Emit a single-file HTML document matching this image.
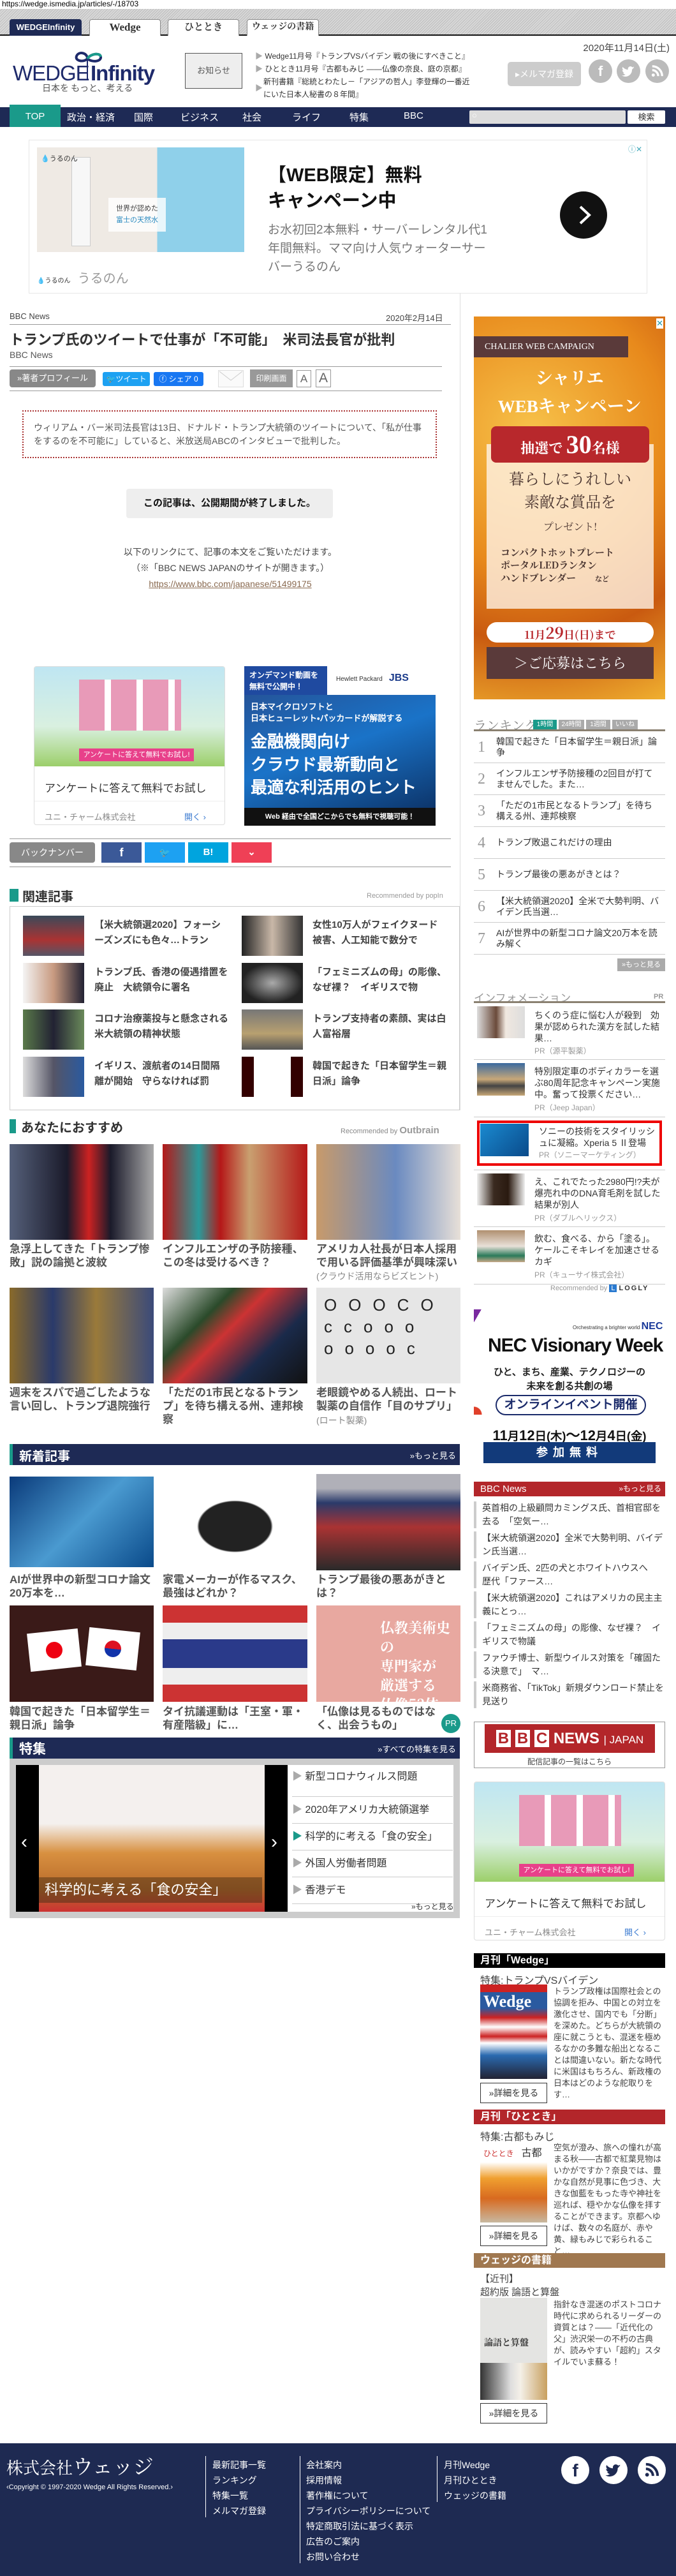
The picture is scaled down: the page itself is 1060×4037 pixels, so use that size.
<!DOCTYPE html>
<html lang="ja"><head><meta charset="utf-8">
<style>
*{margin:0;padding:0;box-sizing:border-box}
body{width:1060px;height:4037px;position:relative;background:#fff;font-family:"Liberation Sans","Noto Sans CJK JP",sans-serif;color:#333;overflow:hidden;font-size:13px}
.a{position:absolute}
.w{color:#fff}
.t{white-space:nowrap}
.hr{position:absolute;height:1px;background:#999}
.tab{position:absolute;top:30px;height:26px;background:#fff;border:1px solid #888;border-bottom:none;border-radius:4px 4px 0 0;text-align:center;font-weight:bold;font-size:15px;line-height:24px;font-family:"Liberation Serif","Noto Serif CJK SC",serif}
.nav{position:absolute;top:173px;color:#fff;font-size:15px}
.rel{position:absolute;width:210px;font-size:15px;font-weight:bold;line-height:24px;color:#444;height:48px;overflow:hidden}
.img{position:absolute}
.gt{position:absolute;width:226px;font-size:17px;font-weight:bold;line-height:21px;color:#555}
.src{position:absolute;font-size:14px;color:#888}
.rk{position:absolute;left:743px;width:300px;height:50px;border-bottom:1px solid #ccc}
.rk b{position:absolute;left:6px;top:12px;font:24px "Liberation Serif",serif;color:#999;font-weight:normal}
.rk span{position:absolute;left:35px;top:8px;width:258px;font-size:14px;line-height:17px;color:#333}
.inf{position:absolute;left:838px;width:200px;font-size:14px;line-height:18px;color:#333}
.pr{position:absolute;left:838px;font-size:12px;color:#999}
.sep{position:absolute;left:743px;width:300px;height:1px;background:#ccc}
.bl{position:absolute;left:743px;width:300px;border-left:4px solid #ccc;padding-left:9px;font-size:14px;line-height:21px;color:#333;height:42px;overflow:hidden}
.sb{position:absolute;left:743px;width:300px;height:23px;color:#fff;font-weight:bold;font-size:16px;line-height:23px;padding-left:10px}
.btn{position:absolute;left:753px;width:105px;height:32px;border:1px solid #333;font-size:14px;line-height:30px;text-align:center;background:#fff}
.desc{position:absolute;left:868px;width:172px;font-size:13px;line-height:18px;color:#444}
.fl{position:absolute;color:#fff;font-size:14px}
.bar{position:absolute;left:15px;width:706px;height:33px;background:#1e2a55;border-left:5px solid #1a9a8a}
</style></head><body>

<div class="a t" style="left:3px;top:0;font-size:12px;line-height:13px;color:#000">https://wedge.ismedia.jp/articles/-/18703</div>
<div class="a" style="left:0;top:14px;width:1060px;height:42px;background:repeating-linear-gradient(135deg,#d8d8d8 0 2px,#bdbdbd 2px 3px);border-bottom:2px solid #111"></div>
<div class="tab" style="left:15px;width:113px;background:#1e2a55;color:#fff;font-family:'Liberation Sans',sans-serif;font-size:13px;border-color:#1e2a55">WEDGE<span style="font-weight:bold">Infinity</span></div>
<div class="tab" style="left:140px;width:112px;font-size:17px">Wedge</div>
<div class="tab" style="left:263px;width:112px">ひととき</div>
<div class="tab" style="left:387px;width:113px;font-size:14px">ウェッジの書籍</div>

<svg class="a" style="left:20px;top:76px" width="230" height="70" viewBox="0 0 230 70">
<path d="M117 16 C117 6 103 4 100 12 C97 20 112 22 117 16 C122 8 137 6 138 13 C139 21 124 22 117 16" fill="none" stroke="#1e2a6b" stroke-width="4"/>
<path d="M117 16 C122 8 137 6 138 13" fill="none" stroke="#1a9a8a" stroke-width="4"/>
<line x1="117" y1="18" x2="117" y2="50" stroke="#1e2a6b" stroke-width="2"/>
<text x="0" y="50" font-family="Liberation Sans,sans-serif" font-size="33" fill="#1e2a6b" letter-spacing="-1">WEDGE</text>
<text x="122" y="50" font-family="Liberation Sans,sans-serif" font-size="33" font-weight="bold" fill="#1e2a6b" letter-spacing="-1">Infinity</text>
<text x="46" y="67" font-family="Noto Sans CJK JP,sans-serif" font-size="14" fill="#555">日本を もっと、考える</text>
</svg>
<div class="a" style="left:290px;top:83px;width:90px;height:56px;background:#eee;border:1px solid #555;font-size:13px;line-height:54px;text-align:center;color:#555">お知らせ</div>
<div class="a" style="left:400px;top:78px;font-size:12px;line-height:20px;color:#333">
<div><span style="color:#aaa">▶</span> Wedge11月号『トランプVSバイデン 戦の後にすべきこと』</div>
<div><span style="color:#aaa">▶</span> ひととき11月号『古都もみじ ――仏像の奈良、庭の京都』</div>
<div style="position:relative;padding-left:13px"><span style="color:#aaa;position:absolute;left:0;top:10px">▶</span>新刊書籍『総統とわたし－「アジアの哲人」李登輝の一番近<br>にいた日本人秘書の８年間』</div>
</div>
<div class="a t" style="right:10px;top:64px;font-size:15px;color:#444">2020年11月14日(土)</div>
<div class="a" style="left:796px;top:97px;width:115px;height:38px;background:#ccc;border-radius:5px;color:#fff;font-size:14px;line-height:38px;text-align:center">▸メルマガ登録</div>
<div class="a" style="left:923px;top:93px;width:37px;height:37px;border-radius:50%;background:#bbb;color:#fff;font:bold 22px/37px 'Liberation Sans';text-align:center">f</div>
<div class="a" style="left:967px;top:93px;width:37px;height:37px;border-radius:50%;background:#bbb"><svg width="37" height="37" viewBox="0 0 24 24"><path d="M18 8.5c-.5.2-1 .4-1.5.4.6-.3 1-.9 1.2-1.5-.5.3-1.1.5-1.7.7a2.6 2.6 0 0 0-4.5 2.4c-2.2-.1-4.1-1.2-5.4-2.8-.7 1.2-.3 2.7.8 3.5-.4 0-.8-.1-1.2-.3 0 1.3.9 2.4 2.1 2.6-.4.1-.8.1-1.2 0 .3 1.1 1.300 1.8 2.4 1.8-1.1.9-2.5 1.3-3.9 1.1 4.5 2.9 10.5-.2 10.5-5.8v-.3c.5-.3.9-.8 1.4-1.8z" fill="#fff"/></svg></div>
<div class="a" style="left:1012px;top:93px;width:37px;height:37px;border-radius:50%;background:#bbb"><svg width="37" height="37" viewBox="0 0 24 24"><circle cx="8" cy="16" r="1.6" fill="#fff"/><path d="M7 11a6 6 0 0 1 6 6M7 7a10 10 0 0 1 10 10" stroke="#fff" stroke-width="2.2" fill="none"/></svg></div>

<div class="a" style="left:0;top:168px;width:1060px;height:31px;background:#1e2a55"></div>
<div class="a" style="left:15px;top:164px;width:80px;height:35px;background:#1a9a8a;color:#fff;font-size:15px;line-height:38px;text-align:center">TOP</div>
<div class="nav" style="left:105px">政治・経済</div>
<div class="nav" style="left:210px">国際</div>
<div class="nav" style="left:283px">ビジネス</div>
<div class="nav" style="left:380px">社会</div>
<div class="nav" style="left:458px">ライフ</div>
<div class="nav" style="left:548px">特集</div>
<div class="nav" style="left:633px">BBC</div>
<div class="a" style="left:736px;top:173px;width:245px;height:21px;background:#ddd;border-radius:2px"><span style="color:#fff;font-size:13px;padding-left:4px">○</span></div>
<div class="a" style="left:984px;top:173px;width:59px;height:21px;background:#fff;border-radius:2px;font-size:13px;line-height:21px;text-align:center;color:#333">検索</div>

<div class="a" style="left:45px;top:219px;width:970px;height:241px;border:1px solid #e6e6e6"></div>
<div class="a" style="left:58px;top:231px;width:325px;height:164px;background:linear-gradient(90deg,#efeae4 0 58%,#8fd0ea 58% 100%)"></div>
<div class="a" style="left:112px;top:246px;width:30px;height:140px;background:#f7f7f7;border:1px solid #ccc"></div>
<div class="a" style="left:170px;top:310px;width:90px;height:53px;background:rgba(255,255,255,.8);font-size:11px;line-height:18px;text-align:center;padding-top:8px;color:#444">世界が認めた<br><span style="color:#2a8ac0">富士の天然水</span></div>
<div class="a" style="left:64px;top:240px;font-size:11px;color:#333">💧うるのん</div>
<div class="a t" style="left:420px;top:255px;font-size:29px;font-weight:bold;color:#111;line-height:40px">【WEB限定】無料<br>キャンペーン中</div>
<div class="a" style="left:420px;top:346px;width:360px;font-size:19px;line-height:29px;color:#777">お水初回2本無料・サーバーレンタル代1年間無料。ママ向け人気ウォーターサーバーうるのん</div>
<div class="a" style="left:878px;top:300px;width:74px;height:74px;border-radius:50%;background:#111"><svg width="74" height="74"><path d="M32 24 L46 37 L32 50" stroke="#fff" stroke-width="4" fill="none"/></svg></div>
<div class="a t" style="left:58px;top:420px;font-size:20px;color:#999"><span style="font-size:10px;color:#333">💧うるのん</span>&nbsp; うるのん</div>
<div class="a" style="left:985px;top:225px;font-size:12px;color:#4ab">ⓘ✕</div>

<div class="a" style="left:721px;top:460px;width:1px;height:1280px;background:#ddd"></div>
<div class="a t" style="left:15px;top:488px;font-size:13px;color:#444">BBC News</div>
<div class="a t" style="left:605px;top:488px;font-size:13px;color:#444">2020年2月14日</div>
<div class="hr" style="left:15px;top:508px;width:692px"></div>
<div class="a t" style="left:15px;top:515px;font-size:22px;font-weight:bold;color:#333">トランプ氏のツイートで仕事が「不可能」　米司法長官が批判</div>
<div class="a t" style="left:15px;top:548px;font-size:14px;color:#555">BBC News</div>
<div class="hr" style="left:15px;top:574px;width:678px"></div>
<div class="a" style="left:15px;top:579px;width:135px;height:28px;background:#888;border-radius:4px;color:#fff;font-size:13px;line-height:28px;text-align:center">»著者プロフィール</div>
<div class="a" style="left:161px;top:583px;width:74px;height:22px;background:#1da1f2;border-radius:3px;color:#fff;font-size:12px;line-height:22px;text-align:center">🐦ツイート</div>
<div class="a" style="left:241px;top:583px;width:78px;height:22px;background:#1877f2;border-radius:3px;color:#fff;font-size:12px;line-height:22px;text-align:center">ⓕ シェア 0</div>
<div class="a" style="left:342px;top:580px;width:40px;height:27px;border:1px solid #ddd;background:#fafafa"><svg width="38" height="25"><path d="M1 1 L19 15 L37 1" stroke="#ccc" fill="none"/></svg></div>
<div class="a" style="left:392px;top:579px;width:67px;height:28px;background:#999;color:#fff;font-size:12px;line-height:28px;text-align:center">印刷画面</div>
<div class="a" style="left:465px;top:580px;width:23px;height:27px;border:1px solid #999;font-size:17px;line-height:25px;text-align:center;color:#666">A</div>
<div class="a" style="left:495px;top:579px;width:24px;height:28px;border:1px solid #999;font-size:21px;line-height:26px;text-align:center;color:#666">A</div>
<div class="hr" style="left:15px;top:612px;width:678px"></div>
<div class="a" style="left:35px;top:643px;width:650px;height:75px;border:2px dotted #a33;padding:15px 16px;font-size:14px;line-height:21px;color:#555">ウィリアム・バー米司法長官は13日、ドナルド・トランプ大統領のツイートについて、「私が仕事をするのを不可能に」していると、米放送局ABCのインタビューで批判した。</div>
<div class="a" style="left:198px;top:766px;width:324px;height:46px;background:#eee;border-radius:4px;font-size:15px;font-weight:bold;line-height:46px;text-align:center;color:#111">この記事は、公開期間が終了しました。</div>
<div class="a" style="left:15px;top:853px;width:692px;text-align:center;font-size:14px;line-height:25px;color:#444">以下のリンクにて、記事の本文をご覧いただけます。<br>（※「BBC NEWS JAPANのサイトが開きます。）<br><span style="color:#8a6a50;text-decoration:underline">https://www.bbc.com/japanese/51499175</span></div>

<div class="a" style="left:743px;top:496px;width:300px;height:600px;background:radial-gradient(circle at 30% 30%,#f7c24a,#e88a1c 45%,#c95a10 70%,#f0b030);overflow:hidden">
 <div class="a" style="left:0;top:31px;width:242px;height:33px;background:#5a3a3a;color:#fff;font:14px 'Liberation Serif',serif;line-height:33px;padding-left:17px">CHALIER WEB CAMPAIGN</div>
 <div class="a" style="left:0;top:75px;width:300px;text-align:center;color:#fff;font:bold 27px/44px 'Liberation Serif','Noto Serif CJK SC',serif">シャリエ<br>WEBキャンペーン</div>
 <div class="a" style="left:20px;top:200px;width:262px;height:258px;background:rgba(255,245,235,.78)"></div>
 <div class="a" style="left:27px;top:172px;width:248px;height:57px;background:#b8282c;border-radius:8px;color:#fff;text-align:center;font:bold 22px/57px 'Liberation Serif','Noto Serif CJK SC',serif">抽選で <span style="font-size:40px">30</span>名様</div>
 <div class="a" style="left:20px;top:235px;width:262px;text-align:center;color:#4a3530;font:24px/36px 'Noto Serif CJK SC',serif">暮らしにうれしい<br>素敵な賞品を<br><span style="font-size:16px">プレゼント!</span></div>
 <div class="a" style="left:42px;top:360px;color:#4a3530;font:bold 15px/20px 'Noto Serif CJK SC',serif">コンパクトホットプレート<br>ポータルLEDランタン<br>ハンドブレンダー　　<span style="font-size:11px">など</span></div>
 <div class="a" style="left:20px;top:479px;width:262px;height:32px;background:#fff;border-radius:16px;text-align:center;color:#b8282c;font:bold 17px/32px 'Noto Serif CJK SC',serif">11月<span style="font-size:24px">29</span>日(日)まで</div>
 <div class="a" style="left:20px;top:518px;width:262px;height:50px;background:#5a3a3a;color:#fff;text-align:center;font:22px/50px 'Noto Serif CJK SC',serif">＞ご応募はこちら</div>
 <div class="a" style="right:3px;top:3px;color:#29a;font-size:13px;background:#fff">✕</div>
</div>

<div class="a" style="left:53px;top:1044px;width:300px;height:249px;border:1px solid #ddd;border-radius:4px;overflow:hidden">
 <div style="height:156px;background:linear-gradient(180deg,#bfe6f2,#d9f0e0 60%,#9ccf6a)"></div>
 <div class="a" style="left:70px;top:20px;width:160px;height:80px;background:repeating-linear-gradient(90deg,#e89ab8 0 40px,#fff 40px 50px)"></div>
 <div class="a" style="left:70px;top:128px;width:180px;height:20px;background:#e8408a;color:#fff;font-size:11px;line-height:20px;text-align:center">アンケートに答えて無料でお試し!</div>
 <div class="a t" style="left:16px;top:176px;font-size:17px;color:#333">アンケートに答えて無料でお試し</div>
 <div class="a" style="left:0;top:210px;width:300px;height:1px;background:#eee"></div>
 <div class="a t" style="left:16px;top:225px;font-size:13px;color:#888">ユニ・チャーム株式会社</div>
 <div class="a t" style="left:235px;top:225px;font-size:13px;color:#3a7ad0">開く ›</div>
</div>
<div class="a" style="left:383px;top:1044px;width:300px;height:250px;background:linear-gradient(160deg,#284a8a,#1a73c8 50%,#0a2a5a);overflow:hidden">
 <div class="a" style="left:0;top:0;width:130px;height:45px;background:#1f4aa0;color:#fff;font:bold 12px/18px sans-serif;padding:5px 8px">オンデマンド動画を<br>無料で公開中！</div>
 <div class="a" style="left:130px;top:0;width:170px;height:45px;background:#fff;color:#333;font-size:10px;padding:10px 14px">Hewlett Packard　<b style="font-size:16px;color:#1a3a8a">JBS</b></div>
 <div class="a" style="left:10px;top:55px;color:#fff;font:bold 13px/18px sans-serif">日本マイクロソフトと<br>日本ヒューレット・パッカードが解説する</div>
 <div class="a" style="left:10px;top:100px;color:#fff;font:bold 26px/36px sans-serif">金融機関向け<br>クラウド最新動向と<br>最適な利活用のヒント</div>
 <div class="a" style="left:0;top:222px;width:300px;height:28px;background:#111;color:#fff;font:bold 11px/28px sans-serif;text-align:center">Web 経由で全国どこからでも無料で視聴可能！</div>
</div>

<div class="hr" style="left:15px;top:1314px;width:692px"></div>
<div class="a" style="left:15px;top:1320px;width:134px;height:32px;background:#888;border-radius:4px;color:#fff;font-size:14px;line-height:32px;text-align:center">バックナンバー</div>
<div class="a" style="left:159px;top:1320px;width:63px;height:32px;background:#3b5998;color:#fff;font:bold 18px/32px sans-serif;text-align:center">f</div>
<div class="a" style="left:227px;top:1320px;width:63px;height:32px;background:#1da1f2;color:#fff;font:bold 14px/32px sans-serif;text-align:center">🐦</div>
<div class="a" style="left:295px;top:1320px;width:63px;height:32px;background:#00a4de;color:#fff;font:bold 15px/32px sans-serif;text-align:center">B!</div>
<div class="a" style="left:363px;top:1320px;width:63px;height:32px;background:#ef4056;color:#fff;font:bold 15px/32px sans-serif;text-align:center">⌄</div>
<div class="hr" style="left:15px;top:1358px;width:692px"></div>

<div class="a" style="left:15px;top:1393px;width:14px;height:20px;background:#1a9a8a"></div>
<div class="a t" style="left:35px;top:1389px;font-size:20px;font-weight:bold;color:#333">関連記事</div>
<div class="a t" style="left:575px;top:1398px;font-size:11px;color:#999">Recommended by popIn</div>
<div class="a" style="left:15px;top:1420px;width:706px;height:320px;border:1px solid #ccc"></div>
<div class="img" style="left:36px;top:1435px;width:96px;height:63px;background:linear-gradient(#3a4a5a,#a33 60%,#556)"></div>
<div class="rel" style="left:148px;top:1438px">【米大統領選2020】フォーシーズンズにも色々…トラン</div>
<div class="img" style="left:379px;top:1435px;width:96px;height:63px;background:linear-gradient(90deg,#222,#c9b8a8 50%,#333)"></div>
<div class="rel" style="left:490px;top:1438px">女性10万人がフェイクヌード被害、人工知能で数分で</div>
<div class="img" style="left:36px;top:1509px;width:96px;height:63px;background:linear-gradient(90deg,#f4f4f4,#c89a80 50%,#223)"></div>
<div class="rel" style="left:148px;top:1512px">トランプ氏、香港の優遇措置を廃止　大統領令に署名</div>
<div class="img" style="left:379px;top:1509px;width:96px;height:63px;background:radial-gradient(#aaa,#222 70%)"></div>
<div class="rel" style="left:490px;top:1512px">「フェミニズムの母」の彫像、なぜ裸？　イギリスで物</div>
<div class="img" style="left:36px;top:1582px;width:96px;height:63px;background:linear-gradient(90deg,#5a7a4a,#223 50%,#6a8a5a)"></div>
<div class="rel" style="left:148px;top:1585px">コロナ治療薬投与と懸念される米大統領の精神状態</div>
<div class="img" style="left:379px;top:1582px;width:96px;height:63px;background:linear-gradient(#777,#b8a070 60%,#555)"></div>
<div class="rel" style="left:490px;top:1585px">トランプ支持者の素顔、実は白人富裕層</div>
<div class="img" style="left:36px;top:1656px;width:96px;height:63px;background:linear-gradient(90deg,#ddd,#556 50%,#2a5aa0)"></div>
<div class="rel" style="left:148px;top:1659px">イギリス、渡航者の14日間隔離が開始　守らなければ罰</div>
<div class="img" style="left:379px;top:1656px;width:96px;height:63px;background:linear-gradient(90deg,#300 0 20%,#fff 20% 45%,#fff 55% 80%,#300 80%)"></div>
<div class="rel" style="left:490px;top:1659px">韓国で起きた「日本留学生＝親日派」論争</div>

<div class="a" style="left:15px;top:1754px;width:10px;height:22px;background:#1a9a8a"></div>
<div class="a t" style="left:33px;top:1751px;font-size:20px;font-weight:bold;color:#333">あなたにおすすめ</div>
<div class="a t" style="left:534px;top:1763px;font-size:11px;color:#888">Recommended by <b style="font-size:15px;color:#999">Outbrain</b></div>
<div class="img" style="left:15px;top:1793px;width:226px;height:150px;background:linear-gradient(90deg,#55607a,#1a1a2a 40%,#c22 55%,#1a1a2a 70%,#aaa)"></div>
<div class="img" style="left:255px;top:1793px;width:227px;height:150px;background:linear-gradient(90deg,#b51818,#2a9a9a 25%,#b51818 40%,#c9a070 60%,#b51818)"></div>
<div class="img" style="left:496px;top:1793px;width:226px;height:150px;background:linear-gradient(90deg,#c89a6a,#6a8ac0 55%,#e8e0d8)"></div>
<div class="gt" style="left:15px;top:1947px">急浮上してきた「トランプ惨敗」説の論拠と波紋</div>
<div class="gt" style="left:255px;top:1947px">インフルエンザの予防接種、この冬は受けるべき？</div>
<div class="gt" style="left:496px;top:1947px">アメリカ人社長が日本人採用で用いる評価基準が興味深い</div>
<div class="src" style="left:496px;top:1990px">(クラウド活用ならビズヒント)</div>
<div class="img" style="left:15px;top:2018px;width:226px;height:150px;background:linear-gradient(90deg,#8a6a2a,#2a3a6a 30%,#9a7a3a 60%,#3a4a7a)"></div>
<div class="img" style="left:255px;top:2018px;width:227px;height:150px;background:linear-gradient(135deg,#ddd,#2a4a2a 30%,#c33 45%,#1a2a4a 70%,#111)"></div>
<div class="img" style="left:496px;top:2018px;width:226px;height:150px;background:#e6e6e6;color:#222;font-size:26px;line-height:34px;letter-spacing:18px;padding:10px 12px;overflow:hidden">OOOCO<br>ccooo<br>ooooc</div>
<div class="gt" style="left:15px;top:2172px;height:42px;overflow:hidden">週末をスパで過ごしたような言い回し、トランプ退院強行の…</div>
<div class="gt" style="left:255px;top:2172px">「ただの1市民となるトランプ」を待ち構える州、連邦検察</div>
<div class="gt" style="left:496px;top:2172px;height:42px;overflow:hidden">老眼鏡やめる人続出、ロート製薬の自信作「目のサプリ」が…</div>
<div class="src" style="left:496px;top:2216px">(ロート製薬)</div>

<div class="bar" style="top:2263px"><span class="a w" style="left:10px;top:3px;font-size:20px;font-weight:bold">新着記事</span><span class="a w t" style="right:6px;top:8px;font-size:13px">»もっと見る</span></div>
<div class="img" style="left:15px;top:2314px;width:226px;height:142px;background:linear-gradient(135deg,#0a3a7a,#4a9ad0 50%,#0a4a8a)"></div>
<div class="img" style="left:255px;top:2314px;width:227px;height:142px;background:radial-gradient(ellipse at 50% 55%,#222 35%,#fff 37%)"></div>
<div class="img" style="left:496px;top:2310px;width:226px;height:151px;background:linear-gradient(#b0b0b8 0 15%,#2a3a6a 30%,#a33 55%,#2a2a2a)"></div>
<div class="gt" style="left:15px;top:2465px">AIが世界中の新型コロナ論文20万本を…</div>
<div class="gt" style="left:255px;top:2465px">家電メーカーが作るマスク、最強はどれか？</div>
<div class="gt" style="left:496px;top:2465px">トランプ最後の悪あがきとは？</div>
<div class="img" style="left:15px;top:2516px;width:226px;height:151px;background:#3a1a18"><div class="a" style="left:30px;top:40px;width:80px;height:60px;background:#fff;transform:rotate(-6deg)"><div style="margin:17px auto;width:26px;height:26px;border-radius:50%;background:#e01"></div></div><div class="a" style="left:122px;top:38px;width:80px;height:60px;background:#fff;transform:rotate(6deg)"><div style="margin:17px auto;width:26px;height:26px;border-radius:50%;background:linear-gradient(#d12 50%,#13a 50%)"></div></div></div>
<div class="img" style="left:255px;top:2516px;width:227px;height:151px;background:linear-gradient(#c33 0 18%,#eee 18% 35%,#2a3a8a 35% 65%,#eee 65% 82%,#c33 82%)"></div>
<div class="img" style="left:496px;top:2516px;width:226px;height:151px;background:#e8a8a0;color:#fff;font:bold 22px/30px 'Noto Serif CJK SC',serif;padding:20px 0 0 100px">仏教美術史の<br>専門家が<br>厳選する<br>仏像53体</div>
<div class="gt" style="left:15px;top:2672px">韓国で起きた「日本留学生＝親日派」論争</div>
<div class="gt" style="left:255px;top:2672px">タイ抗議運動は「王室・軍・有産階級」に…</div>
<div class="gt" style="left:496px;top:2672px;width:200px">「仏像は見るものではなく、出会うもの」</div>
<div class="a" style="left:692px;top:2686px;width:30px;height:30px;border-radius:50%;background:#1a9a8a;color:#fff;font-size:13px;line-height:30px;text-align:center">PR</div>

<div class="bar" style="top:2723px"><span class="a w" style="left:10px;top:2px;font-size:21px;font-weight:bold">特集</span><span class="a w t" style="right:6px;top:8px;font-size:13px">»すべての特集を見る</span></div>
<div class="a" style="left:15px;top:2756px;width:706px;height:250px;background:#ccc"></div>
<div class="a" style="left:25px;top:2766px;width:426px;height:230px;background:#000"></div>
<div class="a" style="left:61px;top:2766px;width:354px;height:230px;background:linear-gradient(#f4f0ee 0 40%,#d89040 60%,#b86a2a 85%,#c33)"></div>
<div class="a" style="left:33px;top:2870px;color:#fff;font-size:30px">‹</div>
<div class="a" style="left:425px;top:2870px;color:#fff;font-size:30px">›</div>
<div class="a" style="left:61px;top:2942px;width:350px;height:40px;background:rgba(60,40,20,.45)"></div>
<div class="a t" style="left:70px;top:2944px;color:#fff;font-size:22px">科学的に考える「食の安全」</div>
<div class="a" style="left:451px;top:2766px;width:260px;height:230px;background:#fff"></div>
<div class="a" style="left:458px;top:2774px;width:252px;font-size:16px;color:#333">
<div style="height:42px;border-bottom:1px solid #ccc;line-height:22px"><span style="color:#aaa">▶</span> 新型コロナウィルス問題</div>
<div style="height:42px;border-bottom:1px solid #ccc;line-height:42px"><span style="color:#aaa">▶</span> 2020年アメリカ大統領選挙</div>
<div style="height:42px;border-bottom:1px solid #ccc;line-height:42px"><span style="color:#1a9a8a">▶</span> 科学的に考える「食の安全」</div>
<div style="height:42px;border-bottom:1px solid #ccc;line-height:42px"><span style="color:#aaa">▶</span> 外国人労働者問題</div>
<div style="height:42px;border-bottom:1px solid #ccc;line-height:42px"><span style="color:#aaa">▶</span> 香港デモ</div>
</div>
<div class="a t" style="left:645px;top:2979px;font-size:12px;color:#333">»もっと見る</div>

<div class="a t" style="left:743px;top:1121px;font:20px 'Noto Serif CJK SC',serif;color:#888">ランキング</div>
<div class="a" style="left:836px;top:1128px;width:37px;height:16px;background:#1a9a8a;color:#fff;font-size:10px;line-height:16px;text-align:center">1時間</div>
<div class="a" style="left:876px;top:1128px;width:40px;height:16px;background:#aaa;color:#fff;font-size:10px;line-height:16px;text-align:center">24時間</div>
<div class="a" style="left:919px;top:1128px;width:38px;height:16px;background:#aaa;color:#fff;font-size:10px;line-height:16px;text-align:center">1週間</div>
<div class="a" style="left:960px;top:1128px;width:40px;height:16px;background:#aaa;color:#fff;font-size:10px;line-height:16px;text-align:center">いいね</div>
<div class="a" style="left:743px;top:1143px;width:300px;height:3px;background:#8a8070"></div>
<div class="rk" style="top:1146px"><b>1</b><span>韓国で起きた「日本留学生＝親日派」論争</span></div>
<div class="rk" style="top:1196px"><b>2</b><span>インフルエンザ予防接種の2回目が打てませんでした。また…</span></div>
<div class="rk" style="top:1246px"><b>3</b><span>「ただの1市民となるトランプ」を待ち構える州、連邦検察</span></div>
<div class="rk" style="top:1296px"><b>4</b><span style="top:16px">トランプ敗退これだけの理由</span></div>
<div class="rk" style="top:1346px"><b>5</b><span style="top:16px">トランプ最後の悪あがきとは？</span></div>
<div class="rk" style="top:1396px"><b>6</b><span>【米大統領選2020】全米で大勢判明、バイデン氏当選…</span></div>
<div class="rk" style="top:1446px"><b>7</b><span>AIが世界中の新型コロナ論文20万本を読み解く</span></div>
<div class="a" style="left:968px;top:1502px;width:75px;height:20px;background:#aaa;color:#fff;font-size:11px;line-height:20px;text-align:center">»もっと見る</div>

<div class="a t" style="left:743px;top:1550px;font-size:17px;color:#999">インフォメーション</div>
<div class="a" style="left:1025px;top:1556px;font-size:11px;font-weight:bold;color:#999">PR</div>
<div class="a" style="left:743px;top:1569px;width:300px;height:3px;background:#8a8070"></div>
<div class="img" style="left:748px;top:1577px;width:75px;height:50px;background:linear-gradient(90deg,#ddd,#6a4a3a 40%,#f0e8e0 60%,#ddd)"></div>
<div class="inf" style="top:1582px">ちくのう症に悩む人が殺到　効果が認められた漢方を試した結果…</div>
<div class="pr" style="top:1638px">PR（源平製薬）</div>
<div class="sep" style="top:1660px"></div>
<div class="img" style="left:748px;top:1666px;width:75px;height:51px;background:linear-gradient(#3a6aa0,#c8a878 50%,#444 70%,#c8a878)"></div>
<div class="inf" style="top:1670px">特別限定車のボディカラーを選ぶ80周年記念キャンペーン実施中。奮って投票ください…</div>
<div class="pr" style="top:1727px">PR（Jeep Japan）</div>
<div class="sep" style="top:1750px"></div>
<div class="a" style="left:748px;top:1756px;width:290px;height:71px;border:4px solid #e00"></div>
<div class="img" style="left:753px;top:1761px;width:76px;height:51px;background:linear-gradient(135deg,#1a8ad0,#0a4a8a)"></div>
<div class="inf" style="left:845px;top:1764px;width:185px">ソニーの技術をスタイリッシュに凝縮。Xperia 5 Ⅱ登場</div>
<div class="pr" style="left:845px;top:1801px">PR（ソニーマーケティング）</div>
<div class="sep" style="top:1833px"></div>
<div class="img" style="left:748px;top:1839px;width:75px;height:50px;background:linear-gradient(90deg,#eee,#3a2a20 35%,#2a1a10 65%,#eee)"></div>
<div class="inf" style="top:1843px">え、これでたった2980円!?夫が爆売れ中のDNA育毛剤を試した結果が別人</div>
<div class="pr" style="top:1900px">PR（ダブルヘリックス）</div>
<div class="sep" style="top:1922px"></div>
<div class="img" style="left:748px;top:1928px;width:75px;height:50px;background:linear-gradient(#b09070,#e8e0d8 50%,#2a7a5a 80%,#c8a888)"></div>
<div class="inf" style="top:1932px">飲む、食べる、から「塗る」。ケールこそキレイを加速させるカギ</div>
<div class="pr" style="top:1989px">PR（キューサイ株式会社）</div>
<div class="sep" style="top:2012px"></div>
<div class="a t" style="left:863px;top:2013px;font-size:11px;color:#999">Recommended by <span style="background:#2a7ad0;color:#fff;padding:0 3px">L</span> <b style="color:#333;letter-spacing:2px">LOGLY</b></div>

<div class="a" style="left:743px;top:2052px;width:300px;height:241px;background:#fff;overflow:hidden">
 <div class="a" style="left:0;top:0;width:300px;height:165px;background:radial-gradient(circle at 0 100%,#e0402a 0 12px,transparent 13px),linear-gradient(120deg,#7a2aa0 0 3%,transparent 3%),#fff"></div>
 <div class="a" style="left:155px;top:18px;font-size:8px;color:#333">Orchestrating a brighter world <b style="font-size:16px;color:#1a3a9a">NEC</b></div>
 <div class="a t" style="left:22px;top:40px;font:bold 30px 'Liberation Sans',sans-serif;color:#111;letter-spacing:-1px">NEC Visionary Week</div>
 <div class="a" style="left:0;top:88px;width:300px;text-align:center;font:bold 15px/22px sans-serif;color:#222">ひと、まち、産業、テクノロジーの<br>未来を創る共創の場</div>
 <div class="a" style="left:34px;top:134px;width:236px;height:32px;border:2px solid #1a2a6a;border-radius:16px;text-align:center;font:bold 19px/28px sans-serif;color:#1a2a6a">オンラインイベント開催</div>
 <div class="a" style="left:0;top:180px;width:300px;text-align:center;font:bold 22px sans-serif;color:#111">11<small>月</small>12<small>日(木)</small>〜12<small>月</small>4<small>日(金)</small></div>
 <div class="a" style="left:15px;top:208px;width:270px;height:33px;background:#123a7a;color:#fff;font:bold 18px/33px sans-serif;text-align:center;letter-spacing:8px">参加無料</div>
</div>

<div class="sb" style="top:2322px;background:#b3262a;font-weight:normal;font-size:15px">BBC News<span class="a" style="right:6px;font-size:12px">»もっと見る</span></div>
<div class="bl" style="top:2353px">英首相の上級顧問カミングス氏、首相官邸を去る　「空気ー…</div>
<div class="bl" style="top:2400px">【米大統領選2020】全米で大勢判明、バイデン氏当選…</div>
<div class="bl" style="top:2447px">バイデン氏、2匹の犬とホワイトハウスへ　歴代「ファース…</div>
<div class="bl" style="top:2494px">【米大統領選2020】これはアメリカの民主主義にとっ…</div>
<div class="bl" style="top:2541px">「フェミニズムの母」の彫像、なぜ裸？　イギリスで物議</div>
<div class="bl" style="top:2588px">ファウチ博士、新型ウイルス対策を「確固たる決意で」　マ…</div>
<div class="bl" style="top:2635px">米商務省、「TikTok」新規ダウンロード禁止を見送り</div>
<div class="a" style="left:743px;top:2698px;width:300px;height:73px;border:1px solid #999"></div>
<div class="a" style="left:760px;top:2702px;width:267px;height:45px;background:#b3262a;color:#fff;font:bold 24px/45px 'Liberation Sans',sans-serif;text-align:center"><span style="background:#fff;color:#b3262a;padding:0 3px">B</span> <span style="background:#fff;color:#b3262a;padding:0 3px">B</span> <span style="background:#fff;color:#b3262a;padding:0 3px">C</span> NEWS <span style="font-weight:normal;font-size:17px">| JAPAN</span></div>
<div class="a" style="left:743px;top:2752px;width:300px;text-align:center;font-size:12px;color:#444">配信記事の一覧はこちら</div>

<div class="a" style="left:743px;top:2792px;width:300px;height:249px;border:1px solid #ddd;border-radius:4px;overflow:hidden">
 <div style="height:156px;background:linear-gradient(180deg,#bfe6f2,#d9f0e0 60%,#9ccf6a)"></div>
 <div class="a" style="left:70px;top:20px;width:160px;height:80px;background:repeating-linear-gradient(90deg,#e89ab8 0 40px,#fff 40px 50px)"></div>
 <div class="a" style="left:70px;top:128px;width:180px;height:20px;background:#e8408a;color:#fff;font-size:11px;line-height:20px;text-align:center">アンケートに答えて無料でお試し!</div>
 <div class="a t" style="left:16px;top:176px;font-size:17px;color:#333">アンケートに答えて無料でお試し</div>
 <div class="a" style="left:0;top:210px;width:300px;height:1px;background:#eee"></div>
 <div class="a t" style="left:16px;top:225px;font-size:13px;color:#888">ユニ・チャーム株式会社</div>
 <div class="a t" style="left:235px;top:225px;font-size:13px;color:#3a7ad0">開く ›</div>
</div>

<div class="sb" style="top:3061px;background:#000">月刊「Wedge」</div>
<div class="a t" style="left:753px;top:3090px;font-size:16px;color:#444">特集:トランプVSバイデン</div>
<div class="img" style="left:753px;top:3110px;width:105px;height:148px;background:linear-gradient(#c22 0 8%,#2a5aa0 8% 25%,#c22 35%,#fff 45%,#c22 55%,#fff 62%,#2a6ab0 75%,#223)"></div>
<div class="a" style="left:758px;top:3122px;color:#fff;font:bold 26px 'Liberation Serif',serif">Wedge</div>
<div class="desc" style="top:3112px">トランプ政権は国際社会との協調を拒み、中国との対立を激化させ、国内でも「分断」を深めた。どちらが大統領の座に就こうとも、混迷を極めるなかの多難な船出となることは間違いない。新たな時代に米国はもちろん、新政権の日本はどのような舵取りをす…</div>
<div class="btn" style="top:3264px">»詳細を見る</div>
<div class="sb" style="top:3306px;background:#b3262a">月刊「ひととき」</div>
<div class="a t" style="left:753px;top:3335px;font-size:16px;color:#444">特集:古都もみじ</div>
<div class="img" style="left:753px;top:3357px;width:105px;height:126px;background:linear-gradient(#fff 0 25%,#f0a030 45%,#d86a20 70%,#c8b8a0)"></div>
<div class="a" style="left:758px;top:3360px;color:#c33;font-size:12px">ひととき　<span style="color:#333;font-size:16px">古都</span></div>
<div class="desc" style="top:3357px">空気が澄み、旅への憧れが高まる秋――古都で紅葉見物はいかがですか？奈良では、豊かな自然が見事に色づき、大きな伽藍をもった寺や神社を巡れば、穏やかな仏像を拝することができます。京都へゆけば、数々の名庭が、赤や黄、緑もみじで彩られること…</div>
<div class="btn" style="top:3488px">»詳細を見る</div>
<div class="sb" style="top:3531px;background:#a07850">ウェッジの書籍</div>
<div class="a t" style="left:753px;top:3560px;font-size:15px;color:#444">【近刊】</div>
<div class="a t" style="left:753px;top:3581px;font-size:15px;color:#444">超約版 論語と算盤</div>
<div class="img" style="left:753px;top:3601px;width:105px;height:102px;background:#e4e4e2;font:bold 14px 'Noto Serif CJK SC',serif;color:#333;padding:60px 0 0 6px">論語と算盤</div>
<div class="img" style="left:753px;top:3703px;width:105px;height:58px;background:linear-gradient(90deg,#333,#ddd 45%,#f4f0e8 60%,#c8a060)"></div>
<div class="desc" style="top:3603px">指針なき混迷のポストコロナ時代に求められるリーダーの資質とは？――「近代化の父」渋沢栄一の不朽の古典が、読みやすい「超約」スタイルでいま蘇る！</div>
<div class="btn" style="top:3766px">»詳細を見る</div>

<div class="a" style="left:0;top:3829px;width:1060px;height:208px;background:#1e2a52"></div>
<div class="a t" style="left:10px;top:3846px;color:#fff;font:26px/36px 'Noto Serif CJK SC',serif">株式会社<span style="font-size:32px">ウェッジ</span></div>
<div class="a t" style="left:10px;top:3892px;color:#fff;font-size:11px">‹Copyright © 1997-2020 Wedge All Rights Reserved.›</div>
<div class="a" style="left:322px;top:3849px;width:1px;height:96px;background:#fff"></div>
<div class="a" style="left:470px;top:3849px;width:1px;height:168px;background:#fff"></div>
<div class="a" style="left:685px;top:3849px;width:1px;height:72px;background:#fff"></div>
<div class="fl" style="left:333px;top:3851px;line-height:24px">最新記事一覧<br>ランキング<br>特集一覧<br>メルマガ登録</div>
<div class="fl" style="left:480px;top:3851px;line-height:24px">会社案内<br>採用情報<br>著作権について<br>プライバシーポリシーについて<br>特定商取引法に基づく表示<br>広告のご案内<br>お問い合わせ</div>
<div class="fl" style="left:696px;top:3851px;line-height:24px">月刊Wedge<br>月刊ひととき<br>ウェッジの書籍</div>
<div class="a" style="left:880px;top:3849px;width:44px;height:44px;border-radius:50%;background:#fff;color:#1e2a52;font:bold 28px/46px 'Liberation Sans';text-align:center">f</div>
<div class="a" style="left:940px;top:3849px;width:44px;height:44px;border-radius:50%;background:#fff"><svg width="44" height="44" viewBox="0 0 24 24"><path d="M18 8.5c-.5.2-1 .4-1.5.4.6-.3 1-.9 1.2-1.5-.5.3-1.1.5-1.7.7a2.6 2.6 0 0 0-4.5 2.4c-2.2-.1-4.1-1.2-5.4-2.8-.7 1.2-.3 2.7.8 3.5-.4 0-.8-.1-1.2-.3 0 1.3.9 2.4 2.1 2.6-.4.1-.8.1-1.2 0 .3 1.1 1.3 1.8 2.4 1.8-1.1.9-2.5 1.3-3.9 1.1 4.5 2.9 10.5-.2 10.5-5.8v-.3c.5-.3.9-.8 1.4-1.8z" fill="#1e2a52"/></svg></div>
<div class="a" style="left:1000px;top:3849px;width:44px;height:44px;border-radius:50%;background:#fff"><svg width="44" height="44" viewBox="0 0 24 24"><circle cx="8" cy="16" r="1.6" fill="#1e2a52"/><path d="M7 11a6 6 0 0 1 6 6M7 7a10 10 0 0 1 10 10" stroke="#1e2a52" stroke-width="2.2" fill="none"/></svg></div>
</body></html>
